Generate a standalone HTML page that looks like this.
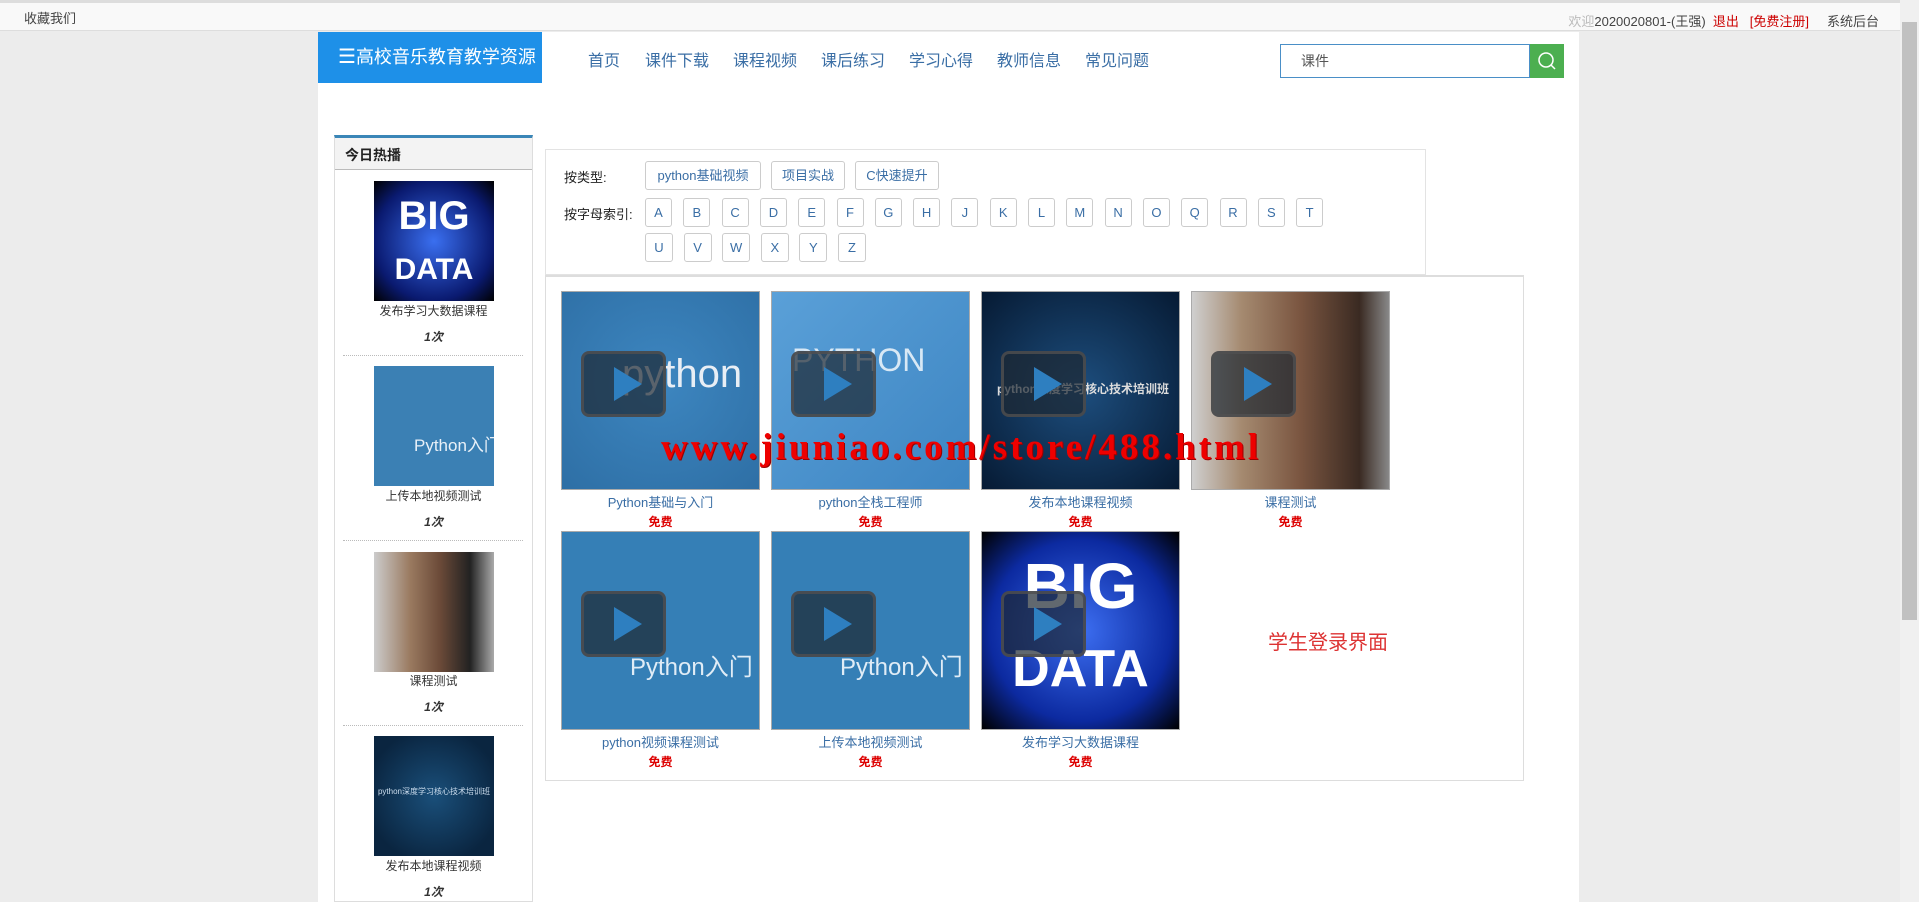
<!DOCTYPE html>
<html><head><meta charset="utf-8"><style>
*{margin:0;padding:0;box-sizing:border-box}
body{width:1919px;height:902px;overflow:hidden;background:#ececec;font-family:"Liberation Sans","Noto Sans CJK SC",sans-serif;position:relative;font-size:13px;color:#333}
.a{position:absolute}
.card,.simg{white-space:nowrap}
.top{left:0;top:0;width:1900px;height:31px;background:#f9f9f9;border-top:3px solid #ddd;border-bottom:1px solid #ddd}
.wrap{left:318px;top:32px;width:1261px;height:870px;background:#fff}
.logo{left:318px;top:32px;width:224px;height:51px;background:#1e90e8;color:#fff;font-size:18px;line-height:50px;padding-left:20px}
.nav{top:47px;font-size:16px;color:#3a6ea5}
.search{left:1280px;top:44px;width:250px;height:34px;border:1px solid #4a8fc7;padding-left:20px;line-height:32px;color:#555;font-size:14px}
.sbtn{left:1530px;top:44px;width:34px;height:34px;background:#4caf50}
.side{left:334px;top:135px;width:199px;height:767px;border:1px solid #ddd;border-top:3px solid #3a86b7}
.sh{left:335px;top:138px;width:197px;height:32px;background:#f3f3f3;border-bottom:1px solid #bbb;font-weight:bold;font-size:14px;line-height:34px;padding-left:10px;color:#222}
.simg{left:374px;width:120px;height:120px;overflow:hidden}
.st{left:334px;width:199px;text-align:center;font-size:12px;color:#333}
.sc{left:334px;width:199px;text-align:center;font-size:12px;font-weight:bold;font-style:italic}
.dot{left:343px;width:180px;border-top:1px dotted #bbb}
.filter{left:545px;top:149px;width:881px;height:126px;border:1px solid #e3e3e3}
.grid{left:545px;top:275px;width:979px;height:506px;border:1px solid #ddd;border-top:2px solid #ddd}
.lbl{font-size:13px;color:#222}
.btn{height:29px;border:1px solid #ccc;border-radius:3px;color:#3a6ea5;font-size:13px;line-height:27px;text-align:center;background:#fff}
.card{width:199px;height:199px;border:1px solid #aaa;overflow:hidden}
.play{left:19px;top:59px;width:85px;height:66px;background:rgba(30,40,50,.7);border:3px solid rgba(80,80,80,.8);border-radius:8px}
.play:after{content:"";position:absolute;left:30px;top:13px;border-left:28px solid #2e7fc0;border-top:17px solid transparent;border-bottom:17px solid transparent}
.ct{width:199px;text-align:center;font-size:13px;color:#3a6ea5}
.cp{width:199px;text-align:center;font-size:12px;color:#d00;font-weight:bold}
</style></head><body>
<div class="a top"></div>
<div class="a" style="left:24px;top:8px;font-size:13px;color:#444">收藏我们</div>
<div class="a" style="right:40px;top:11px;font-size:13px;color:#444;white-space:nowrap"><span style="color:#bbb">欢迎</span>2020020801-(王强) <span style="color:#c00">&nbsp;退出&nbsp;&nbsp; [免费注册]</span>&nbsp;&nbsp;&nbsp;&nbsp; 系统后台</div>
<div class="a" style="left:1900px;top:0;width:19px;height:902px;background:#f0f0f0"></div>
<div class="a" style="left:1902px;top:22px;width:15px;height:598px;background:#c1c1c1"></div>
<div class="a wrap"></div>
<div class="a logo"><span style="font-size:20px">☰</span>高校音乐教育教学资源</div>
<div class="a nav" style="left:588px">首页</div>
<div class="a nav" style="left:645px">课件下载</div>
<div class="a nav" style="left:733px">课程视频</div>
<div class="a nav" style="left:821px">课后练习</div>
<div class="a nav" style="left:909px">学习心得</div>
<div class="a nav" style="left:997px">教师信息</div>
<div class="a nav" style="left:1085px">常见问题</div>
<div class="a search">课件</div>
<div class="a sbtn"><svg width="34" height="34"><circle cx="16" cy="16" r="7" fill="none" stroke="#fff" stroke-width="1.5"/><line x1="21" y1="21" x2="25" y2="25" stroke="#fff" stroke-width="1.5"/></svg></div>

<div class="a side"></div>
<div class="a sh">今日热播</div>
<div class="a simg" style="top:181px;background:radial-gradient(circle,#3a6ff0,#0a1a70 70%,#000);color:#fff;font:bold 40px 'Liberation Sans';text-align:center;line-height:50px;padding-top:10px">BIG<br><span style="font-size:30px">DATA</span></div>
<div class="a st" style="top:302px">发布学习大数据课程</div>
<div class="a sc" style="top:328px">1次</div>
<div class="a dot" style="top:355px"></div>
<div class="a simg" style="top:366px;background:#3b80b4;color:#e8f0f8;font-size:17px;padding:65px 0 0 40px">Python入门</div>
<div class="a st" style="top:487px">上传本地视频测试</div>
<div class="a sc" style="top:513px">1次</div>
<div class="a dot" style="top:540px"></div>
<div class="a simg" style="top:552px;background:linear-gradient(90deg,#ccc 0,#9a7a60 30%,#6b4a38 55%,#222 80%,#aaa)"></div>
<div class="a st" style="top:672px">课程测试</div>
<div class="a sc" style="top:698px">1次</div>
<div class="a dot" style="top:725px"></div>
<div class="a simg" style="top:736px;background:radial-gradient(circle,#1a4f7a,#0a2540 80%);color:#cde;font-size:8px;text-align:center;padding-top:50px">python深度学习核心技术培训班</div>
<div class="a st" style="top:857px">发布本地课程视频</div>
<div class="a sc" style="top:883px">1次</div>

<div class="a filter"></div>
<div class="a lbl" style="left:564px;top:167px">按类型:</div>
<div class="a btn" style="left:645px;top:161px;width:116px">python基础视频</div>
<div class="a btn" style="left:771px;top:161px;width:74px">项目实战</div>
<div class="a btn" style="left:855px;top:161px;width:84px">C快速提升</div>
<div class="a lbl" style="left:564px;top:204px">按字母索引:</div>
<div id="L"></div>
<div class="a grid"></div>

<div class="a card" style="left:561px;top:291px;background:radial-gradient(circle at 50% 45%,#3d86c0,#2e6fa5);color:#e8eef5;font-size:40px;padding:60px 0 0 60px">python<div class="a play"></div></div>
<div class="a card" style="left:771px;top:291px;background:linear-gradient(135deg,#5aa0d8,#3d85c2);color:#d8e8f5;font-size:32px;padding:50px 0 0 20px">PYTHON<div class="a play"></div></div>
<div class="a card" style="left:981px;top:291px;background:radial-gradient(circle,#1d4e7e,#061a33);color:#ddd;font-size:12px;font-weight:bold;padding:88px 0 0 15px">python深度学习核心技术培训班<div class="a play"></div></div>
<div class="a card" style="left:1191px;top:291px;background:linear-gradient(90deg,#cfcfcf 0,#a58a70 25%,#7a5540 55%,#3a2a22 85%,#888)"><div class="a play"></div></div>
<div class="a ct" style="left:561px;top:492px">Python基础与入门</div><div class="a cp" style="left:561px;top:513px">免费</div>
<div class="a ct" style="left:771px;top:492px">python全栈工程师</div><div class="a cp" style="left:771px;top:513px">免费</div>
<div class="a ct" style="left:981px;top:492px">发布本地课程视频</div><div class="a cp" style="left:981px;top:513px">免费</div>
<div class="a ct" style="left:1191px;top:492px">课程测试</div><div class="a cp" style="left:1191px;top:513px">免费</div>

<div class="a card" style="left:561px;top:531px;background:#357fb6;color:#e0ecf6;font-size:24px;padding:115px 0 0 68px">Python入门<div class="a play"></div></div>
<div class="a card" style="left:771px;top:531px;background:#357fb6;color:#e0ecf6;font-size:24px;padding:115px 0 0 68px">Python入门<div class="a play"></div></div>
<div class="a card" style="left:981px;top:531px;background:radial-gradient(circle,#3d6ff2,#0c2aa0 65%,#000);color:#fff;font:bold 64px 'Liberation Sans';text-align:center;line-height:78px;padding-top:15px">BIG<br><span style="font-size:52px">DATA</span><div class="a play"></div></div>
<div class="a ct" style="left:561px;top:732px">python视频课程测试</div><div class="a cp" style="left:561px;top:753px">免费</div>
<div class="a ct" style="left:771px;top:732px">上传本地视频测试</div><div class="a cp" style="left:771px;top:753px">免费</div>
<div class="a ct" style="left:981px;top:732px">发布学习大数据课程</div><div class="a cp" style="left:981px;top:753px">免费</div>

<div class="a" style="left:1268px;top:626px;font-size:20px;color:#d33">学生登录界面</div>
<div class="a" style="left:661px;top:426px;font:bold 37px 'Liberation Serif',serif;color:#e00;letter-spacing:3px;white-space:nowrap;text-shadow:1px 1px 0 #900">www.jiuniao.com/store/488.html</div>

<script>
var s='',l='ABCDEFGHJKLMNOQRST'.split(''),x=645;
l.forEach(function(c){s+='<div class="a btn" style="left:'+x+'px;top:198px;width:27px">'+c+'</div>';x+=38.3;});
x=645;'UVWXYZ'.split('').forEach(function(c){s+='<div class="a btn" style="left:'+x+'px;top:233px;width:28px">'+c+'</div>';x+=38.6;});
document.getElementById('L').innerHTML=s;
</script>
</body></html>
